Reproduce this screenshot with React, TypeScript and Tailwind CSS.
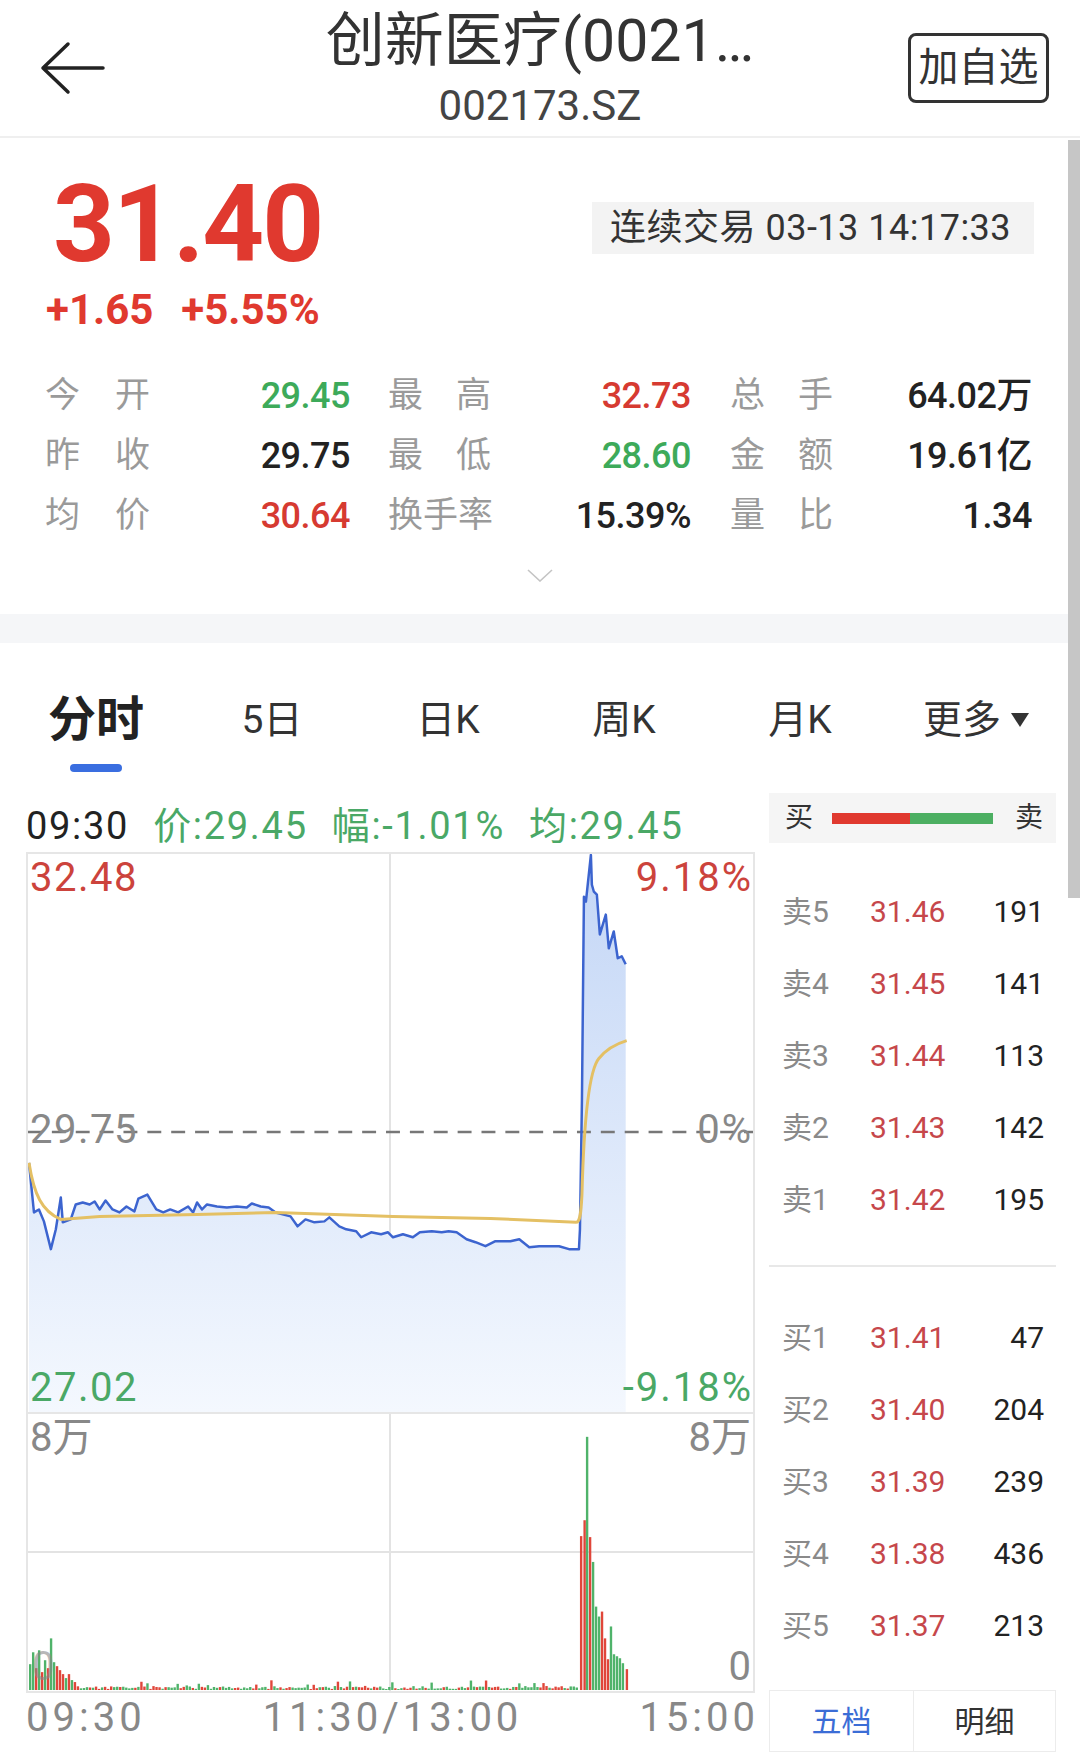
import React from 'react';

const RED = '#e0392f';
const GREEN = '#3daa5a';

const stats = [
  [
    { label: ['今', '开'], value: '29.45', color: GREEN },
    { label: ['最', '高'], value: '32.73', color: '#d63a31' },
    { label: ['总', '手'], value: '64.02万', color: '#222' },
  ],
  [
    { label: ['昨', '收'], value: '29.75', color: '#222' },
    { label: ['最', '低'], value: '28.60', color: GREEN },
    { label: ['金', '额'], value: '19.61亿', color: '#222' },
  ],
  [
    { label: ['均', '价'], value: '30.64', color: '#d63a31' },
    { label: ['换', '手', '率'], value: '15.39%', color: '#222' },
    { label: ['量', '比'], value: '1.34', color: '#222' },
  ],
];

const sells = [
  ['卖5', '31.46', '191'],
  ['卖4', '31.45', '141'],
  ['卖3', '31.44', '113'],
  ['卖2', '31.43', '142'],
  ['卖1', '31.42', '195'],
];

const buys = [
  ['买1', '31.41', '47'],
  ['买2', '31.40', '204'],
  ['买3', '31.39', '239'],
  ['买4', '31.38', '436'],
  ['买5', '31.37', '213'],
];

// price line, in page coordinates (viewBox matches the chart box)
const pricePts: [number, number][] = [
  [27, 1163], [32, 1213], [37, 1210], [42, 1222], [49, 1250], [54, 1230], [59, 1198], [61, 1223],
  [69, 1220], [74, 1205], [81, 1203], [88, 1205], [93, 1202], [98, 1210], [104, 1201], [111, 1210],
  [118, 1213], [125, 1207], [133, 1212], [137, 1199], [146, 1195], [155, 1210], [162, 1213],
  [169, 1210], [177, 1213], [187, 1207], [192, 1213], [196, 1203], [201, 1210], [206, 1205],
  [216, 1207], [226, 1208], [236, 1207], [246, 1208], [251, 1204], [260, 1207], [268, 1208],
  [275, 1213], [290, 1217], [297, 1227], [305, 1220], [314, 1223], [324, 1222], [329, 1218],
  [339, 1227], [346, 1230], [356, 1232], [361, 1238], [371, 1233], [381, 1235], [388, 1233],
  [393, 1238], [403, 1235], [413, 1238], [420, 1233], [432, 1232], [442, 1233], [449, 1232],
  [457, 1233], [467, 1240], [476, 1243], [486, 1247], [496, 1242], [511, 1242], [520, 1240],
  [530, 1248], [540, 1247], [560, 1247], [570, 1250], [580, 1250],
  [581, 1230], [583, 1100], [585, 895], [587, 900], [592, 853], [593, 883], [595, 890], [598, 893],
  [601, 933], [607, 913], [610, 947], [615, 930], [619, 957], [623, 955], [627, 963],
];

const priceLine = pricePts.map((p) => p.join(',')).join(' ');
const priceFill = `${priceLine} 627,1414 27,1414`;

const avgPath =
  'M27,1163 C32,1195 40,1212 59,1220 L98,1217 L196,1215 L275,1213 L393,1217 L491,1219 L577,1223 ' +
  'C581,1223 582,1215 583,1195 C585,1120 590,1070 600,1058 C608,1048 618,1043 628,1040';

type Bar = [number, number, 'r' | 'g'];

const buildBars = (): Bar[] => {
  const bars: Bar[] = [
    [27, 1668, 'g'], [30, 1656, 'g'], [33, 1672, 'r'], [36, 1654, 'g'], [39, 1676, 'r'],
    [42, 1664, 'g'], [45, 1672, 'r'], [48, 1642, 'g'], [51, 1666, 'g'], [54, 1670, 'r'],
    [57, 1674, 'r'], [60, 1678, 'r'], [63, 1682, 'g'], [66, 1678, 'r'], [69, 1684, 'g'], [72, 1686, 'r'],
  ];
  let seed = 11;
  const rnd = () => {
    seed = (seed * 9301 + 49297) % 233280;
    return seed / 233280;
  };
  for (let x = 75; x < 579; x += 3.04) {
    const h = rnd() < 0.1 ? 4 + rnd() * 6 : 1 + rnd() * 3;
    bars.push([x, 1694 - h, rnd() < 0.5 ? 'r' : 'g']);
  }
  bars.push(
    [581, 1539, 'r'], [584.5, 1523, 'r'], [587, 1439, 'g'], [590, 1540, 'r'], [593, 1565, 'g'],
    [596, 1610, 'g'], [599, 1620, 'g'], [602, 1615, 'r'], [605, 1642, 'r'], [608, 1663, 'r'],
    [611, 1630, 'g'], [614, 1658, 'g'], [617, 1660, 'g'], [620, 1662, 'g'], [623, 1667, 'g'],
    [627, 1673, 'r'],
  );
  return bars;
};

const bars = buildBars();

function Header() {
  return (
    <div className="flex h-[138px] items-center border-b-2 border-[#efefef]">
      <div className="flex w-[180px] items-center pl-[39px]">
        <svg width="66" height="54" viewBox="0 0 66 54" fill="none">
          <path d="M29 3 L4 27 L29 51 M4 27 H64" stroke="#222" strokeWidth="3.5" strokeLinecap="round" strokeLinejoin="round" />
        </svg>
      </div>
      <div className="flex flex-1 flex-col items-center">
        <div className="mt-[2px] text-[59px] leading-[64px] text-[#333]">创新医疗(0021…</div>
        <div className="mt-[9px] text-[42px] leading-[48px] text-[#444]">002173.SZ</div>
      </div>
      <div className="flex w-[180px] justify-end pr-[31px]">
        <div className="flex h-[70px] w-[141px] items-center justify-center rounded-[8px] border-[3px] border-[#333] text-[40px] text-[#333]">
          加自选
        </div>
      </div>
    </div>
  );
}

function Label({ chars, w }: { chars: string[]; w: string }) {
  return (
    <div className={`flex justify-between text-[35px] text-[#9a9a9a] ${w}`}>
      {chars.map((c) => (
        <span key={c}>{c}</span>
      ))}
    </div>
  );
}

function PriceBlock() {
  return (
    <div className="flex h-[476px] flex-col pt-[32px]">
      <div className="flex items-start">
        <div className="pl-[46px]">
          <div className="ml-[7px] text-[108px] font-bold leading-none tracking-[-2px]" style={{ color: RED }}>
            31.40
          </div>
          <div className="mt-[11px] flex text-[42px] font-bold leading-none" style={{ color: RED }}>
            <span>+1.65</span>
            <span className="ml-[28px]">+5.55%</span>
          </div>
        </div>
        <div className="ml-auto mr-[46px] mt-[32px] flex h-[52px] w-[442px] items-center bg-[#f3f3f3] pl-[18px] text-[36px] tracking-[0.5px] text-[#333]">
          连续交易 03-13 14:17:33
        </div>
      </div>

      <div className="mt-[35px]">
        {stats.map((row, i) => (
          <div key={i} className="flex h-[60px] items-center pl-[45px]">
            <Label chars={row[0].label} w="w-[105px]" />
            <div className="w-[200px] text-right text-[36px] font-medium tracking-[-0.5px]" style={{ color: row[0].color }}>
              {row[0].value}
            </div>
            <div className="ml-[38px]">
              <Label chars={row[1].label} w="w-[103px]" />
            </div>
            <div className="w-[200px] text-right text-[36px] font-medium tracking-[-0.5px]" style={{ color: row[1].color }}>
              {row[1].value}
            </div>
            <div className="ml-[39px]">
              <Label chars={row[2].label} w="w-[103px]" />
            </div>
            <div className="w-[199px] text-right text-[36px] font-medium tracking-[-0.5px]" style={{ color: row[2].color }}>
              {row[2].value}
            </div>
          </div>
        ))}
      </div>

      <div className="mt-[23px] flex justify-center">
        <svg width="26" height="13" viewBox="0 0 26 13" fill="none">
          <path d="M1 1 L13 12 L25 1" stroke="#c4c4c4" strokeWidth="1.6" />
        </svg>
      </div>
    </div>
  );
}

function Tabs() {
  const others = ['5日', '日K', '周K', '月K'];
  return (
    <div className="h-[147px] pl-[8px] pt-[53px]">
      <div className="flex">
        <div className="flex w-[176px] flex-col items-center">
          <div className="text-[48px] font-bold leading-[48px] text-[#222]">分时</div>
          <div className="mt-[20px] h-[8px] w-[52px] rounded-full bg-[#3a6ee0]" />
        </div>
        {others.map((t) => (
          <div key={t} className="flex h-[48px] w-[176px] items-center justify-center text-[39px] text-[#333]">
            {t}
          </div>
        ))}
        <div className="flex h-[48px] w-[176px] items-center justify-center text-[39px] text-[#333]">
          更多
          <svg className="ml-[10px]" width="18" height="14" viewBox="0 0 18 14">
            <path d="M0 0 H18 L9 14 Z" fill="#333" />
          </svg>
        </div>
      </div>
    </div>
  );
}

function LeftCharts() {
  const green = '#4aa866';
  return (
    <div className="ml-[26px] w-[729px]">
      <div className="flex h-[62px] items-end gap-[24px] pb-[4px] text-[38px] leading-[44px] tracking-[1.7px]" style={{ color: green }}>
        <span className="text-[#222]">09:30</span>
        <span>价:29.45</span>
        <span>幅:-1.01%</span>
        <span>均:29.45</span>
      </div>

      <div className="relative h-[562px] border-2 border-[#e6e6e6]">
        <svg className="absolute inset-0 h-full w-full" viewBox="26 852 729 562" preserveAspectRatio="none">
          <defs>
            <linearGradient id="pf" x1="0" y1="852" x2="0" y2="1414" gradientUnits="userSpaceOnUse">
              <stop offset="0" stopColor="#c3d6f6" />
              <stop offset="1" stopColor="#f4f8fe" />
            </linearGradient>
          </defs>
          <line x1="390" y1="852" x2="390" y2="1414" stroke="#e3e3e3" strokeWidth="2" />
          <polygon points={priceFill} fill="url(#pf)" />
          <line x1="26" y1="1132" x2="755" y2="1132" stroke="#777" strokeWidth="2.5" strokeDasharray="14 10" />
          <polyline points={priceLine} fill="none" stroke="#3c64cf" strokeWidth="2.5" strokeLinejoin="round" />
          <path d={avgPath} fill="none" stroke="#e4c064" strokeWidth="3" />
        </svg>
        <span className="absolute left-[2px] top-0 text-[40px] leading-[48px] tracking-[1.5px] text-[#cc433c]">32.48</span>
        <span className="absolute right-0 top-0 text-[40px] leading-[48px] tracking-[2px] text-[#cc433c]">9.18%</span>
        <span className="absolute left-[2px] top-[252px] text-[40px] leading-[48px] tracking-[1.5px] text-[#888]">29.75</span>
        <span className="absolute right-0 top-[252px] text-[40px] leading-[48px] tracking-[2px] text-[#888]">0%</span>
        <span className="absolute bottom-0 left-[2px] text-[40px] leading-[48px] tracking-[1.5px]" style={{ color: green }}>27.02</span>
        <span className="absolute bottom-0 right-0 text-[40px] leading-[48px] tracking-[2px]" style={{ color: green }}>-9.18%</span>
      </div>

      <div className="relative h-[279px] border-2 border-t-0 border-[#e6e6e6]">
        <svg className="absolute inset-0 h-full w-full" viewBox="26 1416 729 279" preserveAspectRatio="none">
          <line x1="390" y1="1416" x2="390" y2="1695" stroke="#e3e3e3" strokeWidth="2" />
          <line x1="26" y1="1555" x2="755" y2="1555" stroke="#e3e3e3" strokeWidth="2" />
          {bars.map(([x, top, c], i) => (
            <rect key={i} x={x} y={top} width="2.4" height={1694 - top} fill={c === 'r' ? '#e0463a' : '#4fb36a'} />
          ))}
        </svg>
        <span className="absolute left-[2px] top-0 text-[40px] leading-[48px] text-[#888]">8万</span>
        <span className="absolute right-[2px] top-0 text-[40px] leading-[48px] text-[#888]">8万</span>
        <span className="absolute bottom-0 left-[4px] text-[40px] leading-[48px] text-[#888]/60">0</span>
        <span className="absolute bottom-0 right-[2px] text-[40px] leading-[48px] text-[#888]">0</span>
      </div>

      <div className="flex h-[50px] items-center justify-between text-[40px] tracking-[4px] text-[#888]">
        <span>09:30</span>
        <span>11:30/13:00</span>
        <span className="mr-[-4px]">15:00</span>
      </div>
    </div>
  );
}

function BookRow({ row }: { row: string[] }) {
  return (
    <div className="flex h-[72px] items-center pl-[13px] pr-[12px] text-[30px]">
      <span className="w-[88px] text-[#8a8a8a]">{row[0]}</span>
      <span className="flex-1 text-[#c6474b]">{row[1]}</span>
      <span className="text-right text-[#222]">{row[2]}</span>
    </div>
  );
}

function OrderBook() {
  return (
    <div className="ml-[14px] w-[287px]">
      <div className="mt-[3px] flex h-[50px] items-center bg-[#f5f5f5] pl-[16px] text-[28px] text-[#333]">
        <span>买</span>
        <div className="ml-[19px] flex h-[11px] w-[161px]">
          <div className="w-[78px] bg-[#e0392f]" />
          <div className="flex-1 bg-[#4caf62]" />
        </div>
        <span className="ml-[22px]">卖</span>
      </div>
      <div className="mt-[32px]">
        {sells.map((r) => (
          <BookRow key={r[0]} row={r} />
        ))}
      </div>
      <div className="mt-[30px] h-[2px] bg-[#e8e8e8]" />
      <div className="mt-[34px]">
        {buys.map((r) => (
          <BookRow key={r[0]} row={r} />
        ))}
      </div>
      <div className="mt-[29px] flex h-[62px] border border-[#ececec] text-[30px]">
        <div className="flex w-[143px] items-center justify-center text-[#3b6dd6]">五档</div>
        <div className="flex flex-1 items-center justify-center border-l border-[#ececec] text-[#333]">明细</div>
      </div>
    </div>
  );
}

export default function App() {
  return (
    <div className="relative h-[1762px] w-[1080px] overflow-hidden bg-white font-['Roboto','Noto_Sans_CJK_SC',sans-serif] text-[#222]">
      <Header />
      <PriceBlock />
      <div className="h-[29px] bg-[#f5f6f8]" />
      <Tabs />
      <div className="flex">
        <LeftCharts />
        <OrderBook />
      </div>
      <div className="absolute right-0 top-[140px] h-[758px] w-[12px] bg-[#c6c6c6]" />
    </div>
  );
}
